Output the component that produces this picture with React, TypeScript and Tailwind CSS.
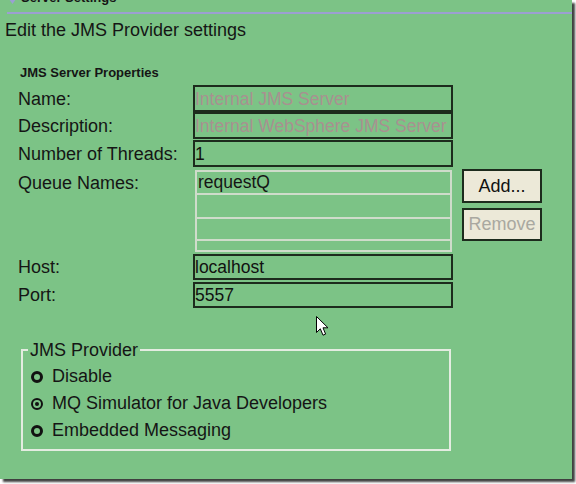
import React from "react";

const FONT = { fontFamily: '"Liberation Sans", Arial, sans-serif' };

function Radio({ checked, label }: { checked?: boolean; label: string }) {
  return (
    <div className="flex h-[27px] items-center gap-[9px] pl-[8px]">
      <div
        className={`flex h-[12px] w-[12px] items-center justify-center rounded-full border-[#111] ${
          checked ? "border-2" : "border-[3px]"
        }`}
      >
        {checked && <div className="h-[4px] w-[4px] rounded-full bg-[#111]" />}
      </div>
      <span className="text-[18px] leading-[27px]">{label}</span>
    </div>
  );
}

function Row({
  label,
  value,
  disabled,
  h,
  mt,
}: {
  label: string;
  value: string;
  disabled?: boolean;
  h: "a" | "b";
  mt: string;
}) {
  const big = h === "a";
  return (
    <div className={`flex pl-[18px] ${mt}`}>
      <div className={`w-[175px] text-[18px] ${big ? "h-[27px] leading-[27px] pt-[1px]" : "h-[26px] leading-[26px]"}`}>
        {label}
      </div>
      <div
        className={`w-[260px] overflow-hidden whitespace-nowrap border-2 border-[#1d2b1d] text-[17.5px] ${
          big ? "h-[27px] leading-[23px] pt-[1px]" : "h-[26px] leading-[22px]"
        } ${disabled ? "text-[#a99090]" : "text-[#111]"}`}
      >
        {value}
      </div>
    </div>
  );
}

export default function App() {
  return (
    <div className="h-[484px] w-[576px] overflow-hidden bg-white" style={FONT}>
      <div className="relative h-[479px] w-[572px] overflow-hidden bg-[#7cc386] text-[#151515] shadow-[3px_3px_2px_rgba(0,0,0,0.75)]">
        {/* header */}
        <div className="-mt-[9px] flex h-[13px] items-end gap-[5px] pl-[9px]">
          <svg width="7" height="5" viewBox="0 0 7 5">
            <path d="M0 0 L7 0 L3.5 5 Z" fill="#9aa0d4" />
          </svg>
          <span className="text-[13px] font-bold leading-[13px]">Server Settings</span>
        </div>
        <div className="ml-[7px] mt-[8px] h-[2px] bg-[#9c9fd2]" />

        <div className="mt-[6px] pl-[5px] text-[18px] leading-[20px]">Edit the JMS Provider settings</div>

        <div className="mt-[25px] pl-[20px] text-[13px] font-bold leading-[16px]">JMS Server Properties</div>

        <div className="mt-[4px] flex flex-col">
          <Row label="Name:" value="Internal JMS Server" disabled h="a" mt="mt-0" />
          <Row label="Description:" value="Internal WebSphere JMS Server" disabled h="a" mt="mt-0" />
          <Row label="Number of Threads:" value="1" h="a" mt="mt-[1px]" />

          {/* Queue names */}
          <div className="mt-[3px] flex pl-[18px]">
            <div className="h-[26px] w-[175px] text-[18px] leading-[26px]">Queue Names:</div>
            <div className="ml-[2px] flex h-[82px] w-[257px] flex-col border-2 border-[#cfdccb]">
              <div className="h-[23px] border-b-2 border-[#cfdccb] pl-[1px] text-[17.5px] leading-[21px]">requestQ</div>
              <div className="h-[24px] border-b-2 border-[#cfdccb]" />
              <div className="h-[22px] border-b-2 border-[#cfdccb]" />
              <div className="flex-1" />
            </div>
            <div className="-mt-[1px] ml-[10px] flex flex-col">
              <div className="flex h-[34px] w-[80px] items-center justify-center border-2 border-[#1d2b1d] bg-[#ece9d8] text-[18px] text-[#111]">
                Add...
              </div>
              <div className="mt-[5px] flex h-[33px] w-[80px] items-center justify-center border-2 border-[#1d2b1d] bg-[#ece9d8] text-[18px] text-[#a9a8a0]">
                Remove
              </div>
            </div>
          </div>

          <Row label="Host:" value="localhost" h="b" mt="mt-[2px]" />
          <Row label="Port:" value="5557" h="b" mt="mt-[2px]" />
        </div>

        {/* group box */}
        <div className="relative ml-[21px] mt-[41px] h-[102px] w-[430px] border-2 border-[#e4ece1] pt-[12px]">
          <span className="absolute -top-[11px] left-[5px] bg-[#7cc386] px-[2px] text-[18px] leading-[20px]">
            JMS Provider
          </span>
          <Radio label="Disable" />
          <Radio label="MQ Simulator for Java Developers" checked />
          <Radio label="Embedded Messaging" />
        </div>

        {/* mouse cursor */}
        <svg className="absolute left-[316px] top-[316px]" width="13" height="21" viewBox="0 0 13 21">
          <path
            d="M0.5 0.5 L0.5 16.5 L4.3 12.8 L7 19.2 L9.6 18.1 L7 11.8 L12 11.8 Z"
            fill="#fff"
            stroke="#000"
            strokeWidth="1"
            strokeLinejoin="miter"
          />
        </svg>
      </div>
    </div>
  );
}
